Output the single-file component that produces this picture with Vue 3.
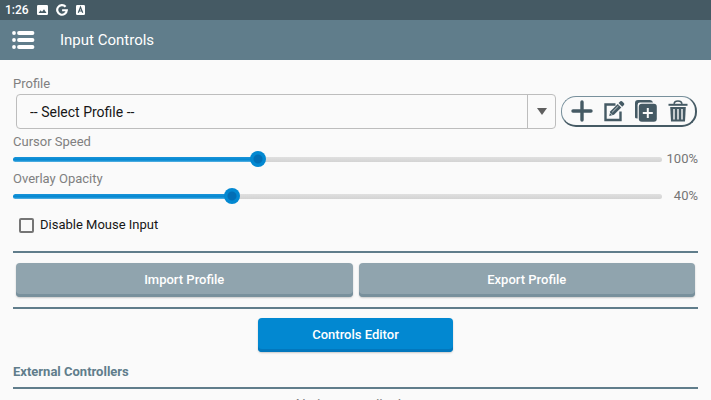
<script setup>
import { computed, ref } from 'vue'

const profile = ref('')
const cursorSpeed = ref(100)
const overlayOpacity = ref(40)
const disableMouse = ref(false)

const sliders = computed(() => [
  { id: 'cursor-speed', label: 'Cursor Speed', model: cursorSpeed, min: 10, max: 250 },
  { id: 'overlay-opacity', label: 'Overlay Opacity', model: overlayOpacity, min: 10, max: 100 },
])

function fillStyle(s) {
  const part = (s.model.value - s.min) / (s.max - s.min)
  return { '--fill': `calc(8px + (100% - 16px) * ${part})` }
}
</script>

<template>
  <div class="page">
    <div class="status">
      <span>1:26</span>
      <svg width="11" height="10" viewBox="0 0 11 10" aria-hidden="true">
        <rect width="11" height="10" rx="1.2" fill="#fff" />
        <path d="M1.6 8 3.6 5.2 5 6.7 7 4.2 9.5 8Z" fill="#455a64" />
      </svg>
      <svg width="12" height="12" viewBox="0 0 11 11" aria-hidden="true">
        <path d="M8.8 2.5A4.4 4.4 0 1 0 9.9 5.7H5.6" fill="none" stroke="#fff" stroke-width="2" />
      </svg>
      <svg width="9" height="10" viewBox="0 0 9 10" aria-hidden="true">
        <rect width="9" height="10" rx="1.2" fill="#fff" />
        <path d="M2.3 7.8 4.5 2.2 6.7 7.8M3.1 6H5.9" fill="none" stroke="#455a64" stroke-width="1.2" />
      </svg>
    </div>
    <header class="bar">
      <button class="menu" type="button" aria-label="Menu">
        <svg width="24" height="20" viewBox="0 0 24 20" aria-hidden="true">
          <g stroke="#fff" stroke-width="3.8" stroke-linecap="round">
            <path d="M7 3H20.5M7 10H20.5M7 17H20.5" />
          </g>
          <g fill="#fff">
            <circle cx="2" cy="3" r="1.9" />
            <circle cx="2" cy="10" r="1.9" />
            <circle cx="2" cy="17" r="1.9" />
          </g>
        </svg>
      </button>
      <h1>Input Controls</h1>
    </header>

    <main>
      <label class="caption" for="profile">Profile</label>
      <div class="profile-row">
        <div class="combo">
          <select id="profile" v-model="profile">
            <option value="">-- Select Profile --</option>
          </select>
          <span class="arrow" aria-hidden="true">
            <svg width="10" height="7" viewBox="0 0 10 7"><path d="M0 0H10L5 7Z" fill="#5f5f5f" /></svg>
          </span>
        </div>
        <div class="tools">
          <button type="button" aria-label="Add profile">
            <svg width="22" height="22" viewBox="0 0 22 22">
              <path d="M11 2V20M2 11H20" stroke="#455a64" stroke-width="3.4" stroke-linecap="round" />
            </svg>
          </button>
          <button type="button" aria-label="Edit profile">
            <svg width="22" height="22" viewBox="0 0 22 22">
              <path d="M12.5 4.5H2.5V20H17.5V11.5" fill="none" stroke="#455a64" stroke-width="2.4" />
              <path d="M6.2 16 7.4 11.2 14.7 4 18.3 7.6 11 14.8Z" fill="#455a64" />
              <path d="M15.6 3.1 17.4 1.3Q18.2.6 19 1.3L21 3.3Q21.6 4.1 21 4.9L19.2 6.7Z" fill="#455a64" />
              <path d="M9.2 12.2 15.4 6" stroke="#fafafa" stroke-width=".7" />
              <path d="M7.4 13.2 9 14.8" stroke="#fafafa" stroke-width=".8" />
            </svg>
          </button>
          <button type="button" aria-label="Duplicate profile">
            <svg width="22" height="22" viewBox="0 0 22 22">
              <path d="M0 17.5V3Q0 0 3 0H15Q17.5 0 18 2.6H5Q2.6 2.6 2.6 5V18.4Q0 18.4 0 17.5Z" fill="#455a64" />
              <rect x="3.8" y="3.8" width="18" height="18" rx="3" fill="#455a64" />
              <path d="M12.8 8V18M7.8 13H17.8" stroke="#fafafa" stroke-width="2" />
            </svg>
          </button>
          <button type="button" aria-label="Remove profile">
            <svg width="22" height="22" viewBox="0 0 22 22">
              <path d="M7 3.8Q7.4 1 11 1T15 3.8" fill="none" stroke="#455a64" stroke-width="1.5" />
              <path d="M1.5 4.8H20.5" stroke="#455a64" stroke-width="2" />
              <path d="M3.2 7H18.8L18 21.4H4Z" fill="#455a64" />
              <path d="M7 9V19.5M11 9V19.5M15 9V19.5" stroke="#fafafa" stroke-width="1.4" />
            </svg>
          </button>
        </div>
      </div>

      <div v-for="s in sliders" :key="s.id" class="setting">
        <label class="caption" :for="s.id">{{ s.label }}</label>
        <div class="slider-row">
          <input
            :id="s.id"
            v-model.number="s.model.value"
            type="range"
            :min="s.min"
            :max="s.max"
            :style="fillStyle(s)"
          />
          <output :for="s.id">{{ s.model.value }}%</output>
        </div>
      </div>

      <label class="check">
        <input v-model="disableMouse" type="checkbox" />
        <span>Disable Mouse Input</span>
      </label>

      <div class="transfer">
        <button class="btn" type="button">Import Profile</button>
        <button class="btn" type="button">Export Profile</button>
      </div>

      <div class="editor">
        <button class="btn primary" type="button">Controls Editor</button>
      </div>

      <h2>External Controllers</h2>
      <p class="empty">No items to display</p>
    </main>
  </div>
</template>

<style>
body {
  margin: 0;
  background: #fafafa;
}
</style>

<style scoped>
.page {
  height: 100vh;
  overflow: hidden;
  font-family: Roboto, "Liberation Sans", sans-serif;
  font-size: 13px;
  line-height: 16px;
  color: #161616;
  background: #fafafa;
}
button,
select,
input {
  font: inherit;
  margin: 0;
}
button {
  border: 0;
  padding: 0;
  background: none;
}
svg {
  display: block;
}
.status {
  display: flex;
  align-items: center;
  gap: 8px;
  height: 20px;
  padding: 0 5px;
  background: #455a64;
  color: #fff;
  font-size: 12px;
  font-weight: 500;
}
.bar {
  display: flex;
  align-items: center;
  gap: 24px;
  height: 40px;
  padding: 0 12px;
  background: #607d8b;
  color: #fff;
}
h1 {
  margin: 0;
  font-size: 15px;
  line-height: 18px;
  font-weight: 400;
}
main {
  padding: 16px 13px 0;
}
.caption {
  display: block;
  color: #808080;
}
.profile-row {
  display: flex;
  align-items: center;
  gap: 5px;
  padding: 2px 1px 5px 3px;
}
.combo {
  position: relative;
  flex: 1;
}
select {
  display: block;
  width: 100%;
  height: 35px;
  padding: 0 40px 0 13px;
  appearance: none;
  border: 1px solid #bdbdbd;
  border-radius: 4px;
  background: #fafafa;
  color: #161616;
  font-size: 14px;
}
.arrow {
  position: absolute;
  top: 1px;
  right: 1px;
  bottom: 1px;
  width: 27px;
  display: flex;
  align-items: center;
  justify-content: center;
  border-left: 1px solid #bdbdbd;
  pointer-events: none;
}
.tools {
  display: flex;
  align-items: center;
  gap: 10px;
  height: 31px;
  padding: 0 6px 0 9px;
  box-sizing: border-box;
  border: 1px solid #78909c;
  border-right: 2px solid #455a64;
  border-bottom: 2px solid #455a64;
  border-radius: 15px;
}
.setting {
  padding-bottom: 3px;
}
.slider-row {
  display: flex;
  align-items: center;
  height: 18px;
}
.slider-row input {
  flex: 1;
  min-width: 0;
  height: 16px;
  appearance: none;
  background: transparent;
}
.slider-row input::-webkit-slider-runnable-track {
  height: 5px;
  border-radius: 3px;
  background:
    linear-gradient(#1a93d8, #0288d1 60%, #5db5e4) 0 0 / var(--fill) 100% no-repeat,
    linear-gradient(#e0e0e0, #d3d3d3);
}
.slider-row input::-webkit-slider-thumb {
  appearance: none;
  width: 16px;
  height: 16px;
  margin-top: -6px;
  border-radius: 50%;
  background: radial-gradient(circle, #026eb5 4px, #0288d1 5px);
}
output {
  width: 36px;
  text-align: right;
  color: #757575;
}
.check {
  display: flex;
  align-items: center;
  gap: 6px;
  padding: 9px 6px 18px;
}
.check input {
  appearance: none;
  box-sizing: border-box;
  width: 15px;
  height: 15px;
  border: 2px solid #757575;
  border-radius: 2px;
}
.check input:checked {
  background: #0288d1;
}
.transfer {
  display: flex;
  gap: 6px;
  padding: 10px 3px;
  border: solid #607d8b;
  border-width: 2px 0;
}
.btn {
  flex: 1;
  height: 34px;
  border-radius: 4px;
  background: #90a4ae;
  color: #fff;
  font-weight: 500;
  box-shadow: inset 0 -3px #78909c, 0 1px 2px #0003;
}
.editor {
  display: flex;
  justify-content: center;
  padding: 9px 0 12px;
}
.primary {
  flex: 0 0 195px;
  background: #0288d1;
  box-shadow: inset 0 -3px #0277bd, 0 1px 2px #0003;
}
h2 {
  margin: 0;
  padding-bottom: 7px;
  border-bottom: 2px solid #607d8b;
  color: #607d8b;
  font-size: 13px;
  font-weight: 700;
}
.empty {
  margin: 0;
  padding-top: 8px;
  text-align: center;
  color: #808080;
  font-size: 14px;
}
</style>
